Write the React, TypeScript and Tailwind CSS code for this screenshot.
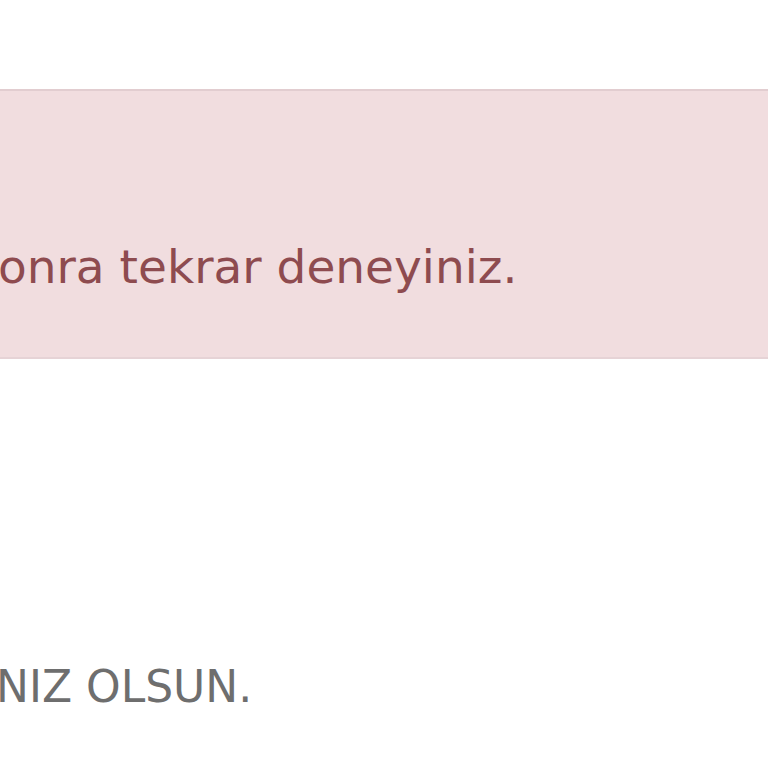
export default function App() {
  return (
    <div className="h-[768px] w-[768px] overflow-hidden bg-white font-['DejaVu_Sans',sans-serif]">
      <div className="h-[89px]" />
      <div className="h-[270px] border-y-2 border-t-[#e2cdd0] border-b-[#e6d3d6] bg-[#f1dddf] pt-[146px]">
        <p className="-ml-[2px] whitespace-nowrap text-[47px] leading-[60px] text-[#8e4b4f]">
          onra tekrar deneyiniz.
        </p>
      </div>
      <div className="pt-[298px]">
        <p className="-ml-[4px] whitespace-nowrap text-[44px] leading-[60px] text-[#6e6e6e]">
          NIZ OLSUN.
        </p>
      </div>
    </div>
  )
}
